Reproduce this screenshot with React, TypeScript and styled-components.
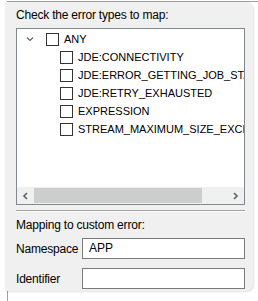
import styled, { createGlobalStyle } from "styled-components";

const Global = createGlobalStyle`
  html, body {
    margin: 0;
    padding: 0;
    background: #ffffff;
    font-family: "Liberation Sans", Arial, sans-serif;
    font-size: 12px;
    color: #000;
  }
`;

const Screen = styled.div`
  position: relative;
  width: 258px;
  height: 301px;
  overflow: hidden;
`;

const Frame = styled.div`
  margin: 1px 0 0 7px;
  height: 300px;
  border-top: 1px solid #a0a0a0;
  border-left: 1px solid #a0a0a0;
`;

const Popup = styled.div`
  position: absolute;
  left: 5px;
  top: 2px;
  width: 248px;
  height: 289px;
  box-sizing: border-box;
  background: #f0f0f0;
  border-radius: 0 7px 7px 0;
  box-shadow: 1px 1px 2px rgba(0, 0, 0, 0.12);
  padding: 6px 8px 0 11px;
  display: flex;
  flex-direction: column;
`;

const Caption = styled.div<{ $top?: number }>`
  height: 15px;
  line-height: 15px;
  margin-top: ${(p) => p.$top ?? 0}px;
  letter-spacing: -0.2px;
  white-space: nowrap;
`;

const TreeBox = styled.div`
  margin-top: 5px;
  width: 229px;
  height: 177px;
  box-sizing: border-box;
  border: 1px solid #828790;
  background: #fff;
  display: flex;
  flex-direction: column;
  overflow: hidden;
`;

const TreeBody = styled.div`
  flex: 1;
  padding-top: 1px;
  overflow: hidden;
`;

const Row = styled.div<{ $indent: number }>`
  height: 18px;
  display: flex;
  align-items: center;
  padding-left: ${(p) => p.$indent}px;
  white-space: nowrap;
  font-size: 11px;
`;

const Toggle = styled.span`
  width: 17px;
  display: flex;
  align-items: center;
  justify-content: center;
  margin-right: 8px;
`;

const Box = styled.span`
  width: 13px;
  height: 13px;
  box-sizing: border-box;
  border: 1px solid #333;
  background: #fff;
  flex-shrink: 0;
  margin-right: 5px;
`;

const ScrollBar = styled.div`
  height: 17px;
  background: #f0f0f0;
  display: flex;
  align-items: center;
`;

const Arrow = styled.span`
  width: 17px;
  height: 17px;
  display: flex;
  align-items: center;
  justify-content: center;
`;

const Track = styled.div`
  flex: 1;
  height: 17px;
  display: flex;
  align-items: center;
`;

const Thumb = styled.div`
  height: 15px;
  background: #cdcdcd;
`;

const Separator = styled.div`
  margin-top: 5px;
  width: 229px;
  border-top: 1px solid #a0a0a0;
  border-bottom: 1px solid #ffffff;
`;

const Field = styled.div<{ $top: number }>`
  margin-top: ${(p) => p.$top}px;
  display: flex;
  align-items: center;
  width: 229px;
`;

const FieldLabel = styled.label`
  width: 66px;
  white-space: nowrap;
  letter-spacing: -0.2px;
`;

const Input = styled.div`
  flex: 1;
  height: 21px;
  box-sizing: border-box;
  border: 1px solid #7a7a7a;
  background: #fff;
  padding-left: 6px;
  line-height: 19px;
`;

const items = [
  "JDE:CONNECTIVITY",
  "JDE:ERROR_GETTING_JOB_STATUS",
  "JDE:RETRY_EXHAUSTED",
  "EXPRESSION",
  "STREAM_MAXIMUM_SIZE_EXCEEDED",
];

const Chevron = ({ dir }: { dir: "down" | "left" | "right" }) => {
  const d =
    dir === "down" ? "M1 1.5 L4 4.5 L7 1.5" : dir === "left" ? "M5 1 L2 4 L5 7" : "M2 1 L5 4 L2 7";
  return (
    <svg width={dir === "down" ? 8 : 7} height={dir === "down" ? 6 : 8} viewBox={dir === "down" ? "0 0 8 6" : "0 0 7 8"}>
      <path d={d} fill="none" stroke="#606060" strokeWidth={dir === "down" ? 1.2 : 1.6} />
    </svg>
  );
};

export default function App() {
  return (
    <Screen>
      <Global />
      <Frame />
      <Popup>
        <Caption>Check the error types to map:</Caption>
        <TreeBox>
          <TreeBody>
            <Row $indent={4}>
              <Toggle>
                <Chevron dir="down" />
              </Toggle>
              <Box />
              <span>ANY</span>
            </Row>
            {items.map((t) => (
              <Row key={t} $indent={43}>
                <Box />
                <span>{t}</span>
              </Row>
            ))}
          </TreeBody>
          <ScrollBar>
            <Arrow>
              <Chevron dir="left" />
            </Arrow>
            <Track>
              <Thumb style={{ width: 168 }} />
            </Track>
            <Arrow>
              <Chevron dir="right" />
            </Arrow>
          </ScrollBar>
        </TreeBox>
        <Separator />
        <Caption $top={6}>Mapping to custom error:</Caption>
        <Field $top={5}>
          <FieldLabel>Namespace</FieldLabel>
          <Input>APP</Input>
        </Field>
        <Field $top={9}>
          <FieldLabel>Identifier</FieldLabel>
          <Input />
        </Field>
      </Popup>
    </Screen>
  );
}
